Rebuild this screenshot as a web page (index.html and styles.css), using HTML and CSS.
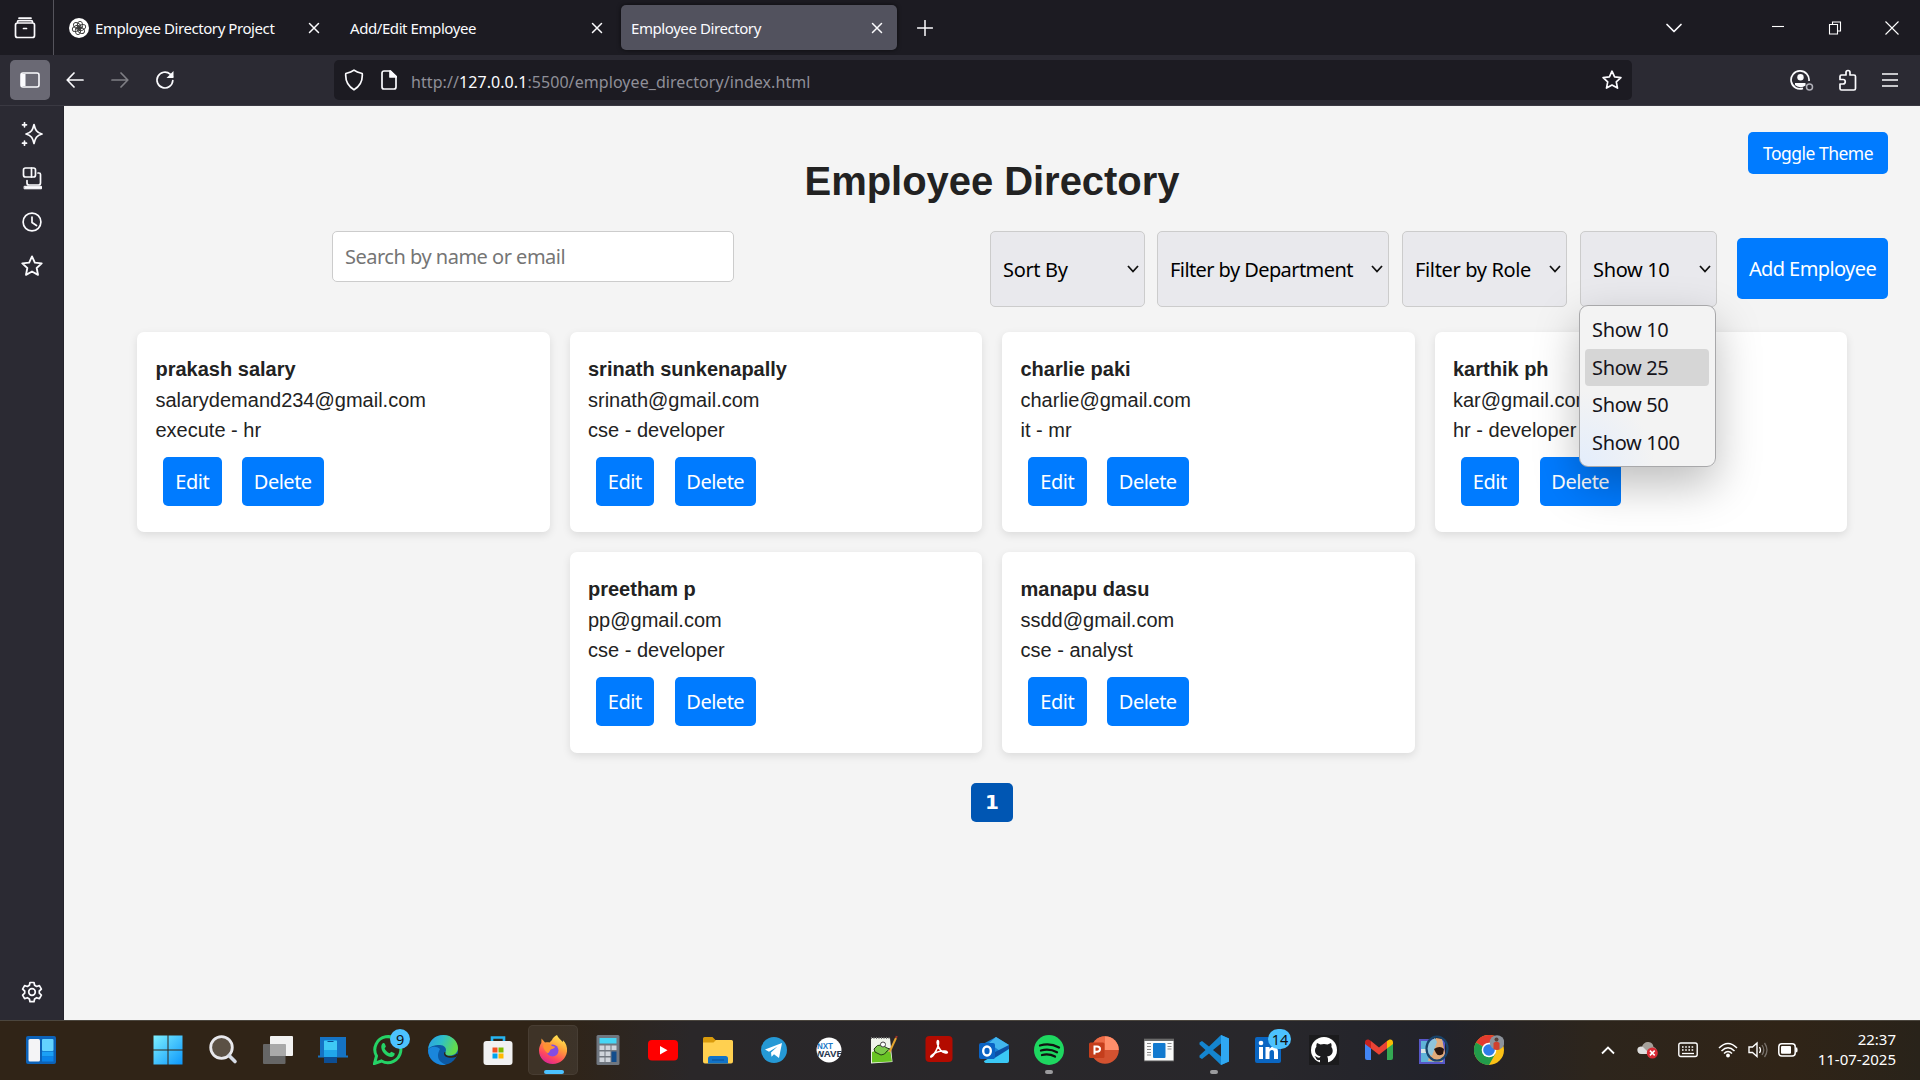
FILE: index.html
```html
<!DOCTYPE html>
<html lang="en">
<head>
<meta charset="utf-8">
<title>Employee Directory</title>
<link rel="stylesheet" href="styles.css">
</head>
<body>
<div class="screen">
  <header class="tabbar">
    <div class="recent"><svg class="ico" width="22" height="22" viewBox="0 0 22 22"><path d="M5 1.200h12M3.500 4.800q0-1.200 1.500-1.200h12q1.500 0 1.500 1.200M1.500 9V8a2 2 0 0 1 2-2h15a2 2 0 0 1 2 2v10.500a2 2 0 0 1-2 2h-15a2 2 0 0 1-2-2zM9.500 11.500h3"/></svg></div>
    <div class="tab tab-first">
      <svg class="favicon" width="20" height="20" viewBox="0 0 20 20"><circle cx="10" cy="10" r="10" fill="#fff"/><g fill="none" stroke="#333" stroke-width=".9"><ellipse cx="11" cy="7.300" rx="2.700" ry="4"/><ellipse cx="11" cy="7.300" rx="2.700" ry="4" transform="rotate(60 10 10)"/><ellipse cx="11" cy="7.300" rx="2.700" ry="4" transform="rotate(120 10 10)"/><ellipse cx="11" cy="7.300" rx="2.700" ry="4" transform="rotate(180 10 10)"/><ellipse cx="11" cy="7.300" rx="2.700" ry="4" transform="rotate(240 10 10)"/><ellipse cx="11" cy="7.300" rx="2.700" ry="4" transform="rotate(300 10 10)"/></g></svg>
      <span class="tab-title">Employee Directory Project</span>
      <svg class="ico close" width="12" height="12" viewBox="0 0 12 12"><path d="M1.500 1.500l9 9M10.500 1.500l-9 9"/></svg>
    </div>
    <div class="tab tab-second">
      <span class="tab-title">Add/Edit Employee</span>
      <svg class="ico close" width="12" height="12" viewBox="0 0 12 12"><path d="M1.500 1.500l9 9M10.500 1.500l-9 9"/></svg>
    </div>
    <div class="tab tab-active">
      <span class="tab-title">Employee Directory</span>
      <svg class="ico close" width="12" height="12" viewBox="0 0 12 12"><path d="M1.500 1.500l9 9M10.500 1.500l-9 9"/></svg>
    </div>
    <svg class="ico newtab" width="16" height="16" viewBox="0 0 16 16"><path d="M8 .5v15M.5 8h15"/></svg>
    <div class="winctl">
      <svg class="ico" width="18" height="18" viewBox="0 0 18 18"><path d="M2 5.500l7 7 7-7"/></svg>
      <svg class="thin min" width="14" height="14" viewBox="0 0 14 14"><path d="M1 5.500h12"/></svg>
      <svg class="thin" width="14" height="14" viewBox="0 0 14 14"><path d="M1.500 3.500h8v9.500h-8zM4.500 3.500v-2.500h8v9h-3"/></svg>
      <svg class="thin" width="14" height="14" viewBox="0 0 14 14"><path d="M.5.500l13 13M13.500.500l-13 13"/></svg>
    </div>
  </header>

  <div class="toolbar">
    <div class="side-btn"><svg width="20" height="16" viewBox="0 0 20 16"><rect x="1" y="1" width="18" height="14" rx="2" fill="none" stroke="#fbfbfe" stroke-width="1.600"/><path d="M1 2h4.500v12H1z" fill="#fbfbfe"/></svg></div>
    <svg class="ico back" width="18" height="16" viewBox="0 0 18 16"><path d="M17 8H1.500M8 1L1.200 8 8 15"/></svg>
    <svg class="ico fwd" width="18" height="16" viewBox="0 0 18 16"><path d="M1 8h15.500M10 1l6.800 7-6.800 7"/></svg>
    <svg class="ico reload" width="20" height="20" viewBox="0 0 20 20"><path d="M17.800 10.500a7.900 7.900 0 1 1-2.600-6.300l2.300 2.300"/><path d="M18.500 1v7h-7z" fill="#fbfbfe" stroke="none"/></svg>
    <div class="urlbar">
      <svg class="ico" width="20" height="22" viewBox="0 0 20 22"><path d="M10 1.200c2 1.600 5 2.600 8.200 3.300.6 6.500-1.700 12.500-8.200 16.300C3.500 17 1.200 11 1.800 4.500 5 3.800 8 2.800 10 1.200z"/></svg>
      <svg class="ico doc" width="16" height="20" viewBox="0 0 16 20"><path d="M9.500 1H3a2 2 0 0 0-2 2v14a2 2 0 0 0 2 2h10a2 2 0 0 0 2-2V6.500z"/><path d="M9 1l6.500 6H9z" fill="#fbfbfe"/></svg>
      <span class="url">http://<b>127.0.0.1</b>:5500/employee_directory/index.html</span>
      <svg class="ico bookmark" width="20" height="20" viewBox="0 0 20 20"><path d="M10 1.200l2.600 5.700 6.300.7-4.600 4.200 1.200 6.300L10 15l-5.500 3.100 1.200-6.300L1.100 7.600l6.300-.7z"/></svg>
    </div>
    <div class="tools">
      <svg width="24" height="22" viewBox="0 0 24 22"><path d="M13 19.400A9 9 0 1 1 19 12" fill="none" stroke="#fbfbfe" stroke-width="1.700"/><circle cx="10.500" cy="8.300" r="3.200" fill="#fbfbfe"/><path d="M5 14h10.500v2.500a8 8 0 0 1-10.500-.5z" fill="#fbfbfe"/><circle cx="19.500" cy="18" r="3" fill="none" stroke="#b0b0b8" stroke-width="1.500"/></svg>
      <svg class="ico" width="20" height="22" viewBox="0 0 20 22"><path d="M2 9V7.500A1.500 1.500 0 0 1 3.500 6H8V3.500a2 2 0 0 1 4 0V6h4a1.500 1.500 0 0 1 1.500 1.500v12A1.500 1.500 0 0 1 16 21H3.500A1.500 1.500 0 0 1 2 19.500V15h3a2.200 2.200 0 0 0 0-4.500H2z"/></svg>
      <svg class="ico" width="16" height="16" viewBox="0 0 16 16"><path d="M.5 2h15M.5 8h15M.5 14h15"/></svg>
    </div>
  </div>

  <div class="middle">
    <nav class="rail">
      <svg class="ico" width="22" height="24" viewBox="0 0 22 24"><path d="M13 2.500c1.300 5.500 2.500 8 8 9.500-5.500 1.500-6.700 4-8 9.500-1.300-5.500-2.500-8-8-9.500 5.500-1.500 6.700-4 8-9.500zM3.500.8v4M1.500 2.800h4M3.500 19.200v4M1.500 21.200h4"/></svg>
      <svg class="ico" width="22" height="24" viewBox="0 0 22 24"><rect x="2.500" y="2" width="12" height="9" rx="2"/><path d="M10.500 2v9M17 7h1a1.500 1.500 0 0 1 1.500 1.500V17a2 2 0 0 1-2 2H8a2 2 0 0 1-2-2v-2.500"/><path d="M3.500 20.300h17v2.500h-17z" fill="#fbfbfe" stroke-width="1"/></svg>
      <svg class="ico" width="22" height="24" viewBox="0 0 22 24"><circle cx="11" cy="12" r="8.900"/><path d="M11 7v5.500l4.500 3"/></svg>
      <svg class="ico" width="22" height="24" viewBox="0 0 20 22"><path d="M10 2.200l2.600 5.700 6.300.7-4.600 4.200 1.200 6.300L10 16l-5.500 3.100 1.200-6.300L1.100 8.600l6.300-.7z"/></svg>
      <svg class="ico gear" width="22" height="22" viewBox="0 0 22 22"><path d="M9 1.500h4l.6 2.800 2 1.200 2.800-.9 2 3.500-2.100 1.900v2.200l2.100 1.900-2 3.500-2.800-.9-2 1.200-.6 2.800H9l-.6-2.800-2-1.200-2.800.9-2-3.500L3.700 12.200V10L1.600 8.100l2-3.500 2.800.9 2-1.200z"/><circle cx="11" cy="11" r="3.300"/></svg>
    </nav>

    <main class="page">
      <div class="theme-row"><button class="btn theme">Toggle Theme</button></div>
      <h1>Employee Directory</h1>
      <div class="controls">
        <input class="search" placeholder="Search by name or email">
        <div class="filters">
          <div class="select s-sort"><span>Sort By</span><svg class="caret" width="12" height="8" viewBox="0 0 12 8"><path d="M1 1l5 5.500L11 1"/></svg></div>
          <div class="select s-dept"><span>Filter by Department</span><svg class="caret" width="12" height="8" viewBox="0 0 12 8"><path d="M1 1l5 5.500L11 1"/></svg></div>
          <div class="select s-role"><span>Filter by Role</span><svg class="caret" width="12" height="8" viewBox="0 0 12 8"><path d="M1 1l5 5.500L11 1"/></svg></div>
          <div class="select s-show"><span>Show 10</span><svg class="caret" width="12" height="8" viewBox="0 0 12 8"><path d="M1 1l5 5.500L11 1"/></svg>
            <ul class="menu"><li>Show 10</li><li class="hover">Show 25</li><li>Show 50</li><li>Show 100</li></ul>
          </div>
          <button class="btn add">Add Employee</button>
        </div>
      </div>
      <section class="cards">
        <article class="card"><strong>prakash salary</strong><p>salarydemand234@gmail.com</p><p>execute - hr</p><div class="acts"><button class="btn">Edit</button><button class="btn">Delete</button></div></article>
        <article class="card"><strong>srinath sunkenapally</strong><p>srinath@gmail.com</p><p>cse - developer</p><div class="acts"><button class="btn">Edit</button><button class="btn">Delete</button></div></article>
        <article class="card"><strong>charlie paki</strong><p>charlie@gmail.com</p><p>it - mr</p><div class="acts"><button class="btn">Edit</button><button class="btn">Delete</button></div></article>
        <article class="card"><strong>karthik ph</strong><p>kar@gmail.com</p><p>hr - developer</p><div class="acts"><button class="btn">Edit</button><button class="btn">Delete</button></div></article>
        <article class="card"><strong>preetham p</strong><p>pp@gmail.com</p><p>cse - developer</p><div class="acts"><button class="btn">Edit</button><button class="btn">Delete</button></div></article>
        <article class="card"><strong>manapu dasu</strong><p>ssdd@gmail.com</p><p>cse - analyst</p><div class="acts"><button class="btn">Edit</button><button class="btn">Delete</button></div></article>
      </section>
      <div class="pager"><button class="pageno">1</button></div>
    </main>
  </div>

  <footer class="taskbar">
    <svg class="widgets" width="30" height="28" viewBox="0 0 30 28"><rect width="30" height="28" rx="2" fill="#0c62b8"/><rect x="2.500" y="3" width="11.500" height="22.500" rx="1.500" fill="#f4f4f6"/><rect x="16" y="3" width="11.500" height="12" rx="1" fill="#63d3ff"/><rect x="16" y="15.500" width="11.500" height="5" fill="#1ba0f5"/><rect x="16" y="20.500" width="11.500" height="5" fill="#0a84ea"/></svg>
    <div class="apps">
      <div class="app"><svg width="30" height="30" viewBox="0 0 30 30"><defs><linearGradient id="win" gradientUnits="userSpaceOnUse" x1="0" y1="0" x2="30" y2="30"><stop offset="0" stop-color="#7ff1ff"/><stop offset="1" stop-color="#0a95fb"/></linearGradient></defs><path d="M.5.500h14v14H.5zM15.500.500h14v14h-14zM.5 15.500h14v14H.5zM15.500 15.500h14v14h-14z" fill="url(#win)"/></svg></div>
      <div class="app"><svg width="30" height="30" viewBox="0 0 30 30"><circle cx="13.500" cy="12.500" r="10.800" fill="#5b5145" stroke="#e8e8ec" stroke-width="2.800"/><path d="M21 20.500l6 6" stroke="#d5dbe6" stroke-width="3.600" stroke-linecap="round"/></svg></div>
      <div class="app"><svg width="30" height="30" viewBox="0 0 30 30"><rect x="7" y="1" width="23" height="20" rx="1" fill="#f2f2f2"/><rect x="0" y="9" width="22.500" height="20" rx="1" fill="#666"/><path d="M7 9h15.500v12H7z" fill="#a9a9a9"/></svg></div>
      <div class="app"><svg width="30" height="30" viewBox="0 0 30 30"><path d="M2 2h26v18.500h2v2H0v-2h2z" fill="#1573c4"/><rect x="6" y="5" width="13" height="23" rx="1" fill="#20a6ea"/><path d="M6 6h13v9H6z" fill="#3fc9f5"/><path d="M6 22h13v6H6z" fill="#0c4d93"/><path d="M9.500 6.500h6" stroke="#0c4d93"/></svg></div>
      <div class="app"><svg width="30" height="30" viewBox="0 0 30 30"><path d="M1.500 28.500l2-7.500a13 13 0 1 1 5 5z" fill="none" stroke="#25d366" stroke-width="3"/><path d="M9.500 8.500c1-.8 2-.5 2.400.5l1 2.500-1.300 2c1 2.200 2.700 3.800 5 4.800l1.800-1.600 3.200 1.600c.5 2.500-2 4-4 3.700-5-1-8.800-5-9.300-9.500-.1-1.600.3-3 1.200-4z" fill="#25d366"/></svg><span class="badge b9">9</span></div>
      <div class="app"><svg width="30" height="30" viewBox="0 0 30 30"><defs><linearGradient id="edA" x1="0" y1="0" x2="1" y2=".3"><stop offset="0" stop-color="#2b9bea"/><stop offset=".5" stop-color="#2fc0c8"/><stop offset="1" stop-color="#62dc4c"/></linearGradient></defs><circle cx="15" cy="15" r="15" fill="#0c59a4"/><path d="M0 15a15 15 0 0 0 18 14.700C10 27 8 21 12 14c-4-4-11-2-12 1z" fill="#1a86dc"/><path d="M0 14.500C1 5 7.500 0 15.500 0 24 0 30 6.500 30 13c0 5-4 7.500-8.500 7.500-4 0-5-2-3.800-4C19 13 16 10 12 10 6 10 1 12 0 14.500z" fill="url(#edA)"/><path d="M17.500 17c-1 2 1 4 4 4 3 .2 5.500-.8 7-2.300l1.500.3-2 3c-5 1.500-12 1-12-3.500 0-1 .5-1.500 1.500-1.500z" fill="#2f2417"/></svg></div>
      <div class="app"><svg width="30" height="30" viewBox="0 0 30 30"><path d="M9 7V2.500h12V7" fill="none" stroke="#26b4f0" stroke-width="2.600"/><rect x=".5" y="6" width="29" height="24" rx="3" fill="#f1f1f2"/><path d="M9.500 12.500h5v5h-5z" fill="#f25022"/><path d="M15.500 12.500h5v5h-5z" fill="#7fba00"/><path d="M9.500 18.500h5v5h-5z" fill="#00a4ef"/><path d="M15.500 18.500h5v5h-5z" fill="#ffb900"/></svg></div>
      <div class="app current"><svg width="30" height="30" viewBox="0 0 30 30"><defs><linearGradient id="ff" x1=".8" y1="0" x2=".3" y2="1"><stop offset="0" stop-color="#fff04a"/><stop offset=".4" stop-color="#ff9a2a"/><stop offset=".75" stop-color="#ff3b52"/><stop offset="1" stop-color="#d8168f"/></linearGradient></defs><path d="M19 0c1 3 4 4.500 5.500 7 .6-.7.500-1.800.5-1.800C28 8 29.500 12 29 16.500 28 24 22 29 14.800 29 7 29 1 23 1 15.500c0-3 1-5.500 2.300-7.500l.2-4.500L7 7.500c1.500-.4 3-.3 4.500 0L14 5c.7-2 2.500-4 5-5z" fill="url(#ff)"/><circle cx="14.500" cy="15.500" r="6" fill="#7a3fe0"/><path d="M5 10c3-1.800 7-1.500 9 1l3 .8c-.5 2-2.500 2-4 2.500-1.500 1-1 3.500-3.500 4C7 16 5 13.500 5 10z" fill="#ff8a22"/></svg><i class="run wide"></i></div>
      <div class="app"><svg width="30" height="30" viewBox="0 0 30 30"><rect x="3.500" width="23" height="30" rx="1.500" fill="#707780"/><path d="M6.500 3h17v5.500h-17z" fill="#45d6f5"/><path d="M6.500 10.500h5v4.500h-5zM12.500 10.500h5v4.500h-5zM18.500 10.500h5v4.500h-5zM6.500 16.500h5V21h-5zM12.500 16.500h5V21h-5zM6.500 22.500h5V27h-5zM12.500 22.500h5V27h-5z" fill="#cfd5dc"/><path d="M18.500 16.500h5V27h-5z" fill="#124d8c"/></svg></div>
      <div class="app"><svg width="30" height="30" viewBox="0 0 30 30"><rect y="5" width="30" height="20.500" rx="4" fill="#f00"/><path d="M12 11l7.500 4.200L12 19.500z" fill="#fff"/></svg></div>
      <div class="app"><svg width="30" height="30" viewBox="0 0 30 30"><path d="M0 3.500Q0 2 1.500 2h8l3 3H28v5H0z" fill="#d99b0c"/><path d="M0 7.500h10.500l2.500-2.500h15.500Q30 5 30 6.500v20q0 2-2 2H2q-2 0-2-2z" fill="#ffd050"/><path d="M5 28.500v-5Q5 21 7.500 21h15q2.500 0 2.500 2.500v5z" fill="#1173c8"/><path d="M9 25h12" stroke="#0b4f92"/></svg></div>
      <div class="app"><svg width="30" height="30" viewBox="0 0 30 30"><circle cx="15" cy="15" r="13" fill="#2599d5"/><path d="M6 14.500l17-6.500-3 15-5-3.800-2.500 2.500-.5-4.200 6.500-6-8.500 5.200z" fill="#fff"/></svg></div>
      <div class="app"><svg width="30" height="30" viewBox="0 0 30 30"><defs><clipPath id="nx"><circle cx="15" cy="15" r="12.500"/></clipPath></defs><circle cx="15" cy="15" r="12.500" fill="#fff"/><g clip-path="url(#nx)" class="nxt"><text x="3" y="14" textLength="16" lengthAdjust="spacingAndGlyphs" fill="#1b78c8">NXT</text><text x="1" y="22" textLength="28" lengthAdjust="spacingAndGlyphs" fill="#26364d">WAVE</text></g></svg></div>
      <div class="app"><svg width="30" height="30" viewBox="0 0 30 30"><path d="M2 3h19l2.500 24L2 28.500z" fill="#eff3ea"/><path d="M3 17q10-4 18.500 0l1.500 9.500-20 1z" fill="#69c423"/><path d="M5 14q3-5 8-4l5 3 3 1-3 2q-2 4-6 4l-6-3z" fill="#7ccb4a" stroke="#253b17"/><circle cx="14" cy="9.500" r="2.500" fill="#fff" stroke="#444"/><path d="M27 3l-6.500 14" stroke="#e3a42f" stroke-width="2"/><path d="M27.800 1l-.8 2" stroke="#a3322a" stroke-width="2"/><path d="M2 3h20" stroke="#777" stroke-dasharray="1 1.500" stroke-width="2"/></svg></div>
      <div class="app"><svg width="30" height="30" viewBox="0 0 30 30"><rect x="1.500" y="1" width="27" height="26" rx="4" fill="#b30b00"/><path d="M7.500 20.500c-2 2.500.5 1.800 2.500-1.300 3-4.500 5-9 4.500-12.500-.5-2.500-2-.5-1 2.500 1.300 4.500 4.500 8 8 8.700 3 .5 2-1.500-.5-1.800-4-.3-9.500 1-13.500 4.400z" fill="none" stroke="#fff" stroke-width="1.600"/></svg></div>
      <div class="app"><svg width="30" height="30" viewBox="0 0 30 30"><path d="M4 9L17 2l13 8v5L14 25 5 16z" fill="#1680d5"/><path d="M17 2l13 8-9 6-11-8z" fill="#42b6ee"/><path d="M30 12v14q0 2-2 2H8q-3 0-3-2z" fill="#3bc8f5"/><path d="M30 10v4L14 24l-4-4z" fill="#0d50a5"/><rect y="8" width="16" height="16" rx="2" fill="#0a63c4"/><ellipse cx="8" cy="16" rx="3.800" ry="4.500" fill="none" stroke="#fff" stroke-width="2.400"/></svg></div>
      <div class="app"><svg width="30" height="30" viewBox="0 0 30 30"><circle cx="15" cy="15" r="15" fill="#1ed760"/><path d="M6 10.500q10-3 19 2M7 15.500q8.500-2.300 16 1.800M8 20q7-1.800 13 1.600" fill="none" stroke="#111" stroke-width="2.300" stroke-linecap="round"/></svg><i class="run"></i></div>
      <div class="app"><svg width="30" height="30" viewBox="0 0 30 30"><circle cx="16" cy="15" r="13.800" fill="#d35230"/><path d="M2.500 15A13.700 13.700 0 0 1 16 1.200V15z" fill="#ed6c47"/><path d="M16 1.200A13.700 13.700 0 0 1 29.800 15H16z" fill="#ff8f6b"/><rect y="7.500" width="15.500" height="15.500" rx="1.500" fill="#c43e1c"/><path d="M5.500 19.500v-8H8q3 0 3 2.600T8 16.700H5.500" fill="none" stroke="#fff" stroke-width="2"/></svg></div>
      <div class="app"><svg width="30" height="30" viewBox="0 0 30 30"><path d="M0 4h30v22H0z" fill="#fafafa" stroke="#555"/><path d="M0 4h30v2H0z" fill="#6b6b6b"/><rect x="9" y="8" width="12.500" height="15" rx="1" fill="#1279cf"/><path d="M3 8.500h4M3 11.500h4M3 14.500h4M3 17.500h4M3 20h4M23.500 8.500h4M23.500 11.500h4M23.500 14h4" stroke="#8b8b8b"/></svg></div>
      <div class="app"><svg width="30" height="30" viewBox="0 0 30 30"><path d="M22 0l8 3.500v23L22 30 10 18.500 3 24l-2.500-1.500v-2L6.500 15 .5 9.500v-2L3 6l7 5.500zM22 8.500L14 15l8 6.500z" fill="#1485cf" fill-rule="evenodd"/><path d="M22 0l8 3.500v23L22 30z" fill="#2fa8f2"/></svg><i class="run"></i></div>
      <div class="app"><svg width="30" height="30" viewBox="0 0 30 30"><rect x="1" y="2" width="26" height="26" rx="2" fill="#0a66c2"/><circle cx="7" cy="8" r="2.300" fill="#fff"/><path d="M5 12h4v12H5zM11.500 12h4v1.700c1-1.400 2.300-2 4-2 3.500 0 4.500 2.300 4.500 5.300v7h-4v-6.300c0-1.700-.5-2.700-2-2.700s-2.500 1-2.500 2.800V24h-4z" fill="#fff"/></svg><span class="badge b14">14</span></div>
      <div class="app"><svg width="30" height="30" viewBox="0 0 30 30"><path d="M0 0h30v30H0z" fill="#1b1b1d"/><circle cx="15" cy="15" r="13" fill="#fff"/><path d="M8 8l3.500 1.500q3.500-.8 7 0L22 8q1 2 .4 4 1.300 1.500 1.300 3.500c0 4-2.500 5.500-5.700 6 .7.800 1 1.500 1 2.800V28h-8v-3c-3 .6-3.700-1-4.300-2.500l-1.200-1.300c2-.4 2.500 2 5.500 1.300 0-.5.300-.8.700-1.200-3-.4-5.700-2-5.700-6q0-2 1.400-3.500Q7 10 8 8z" fill="#1b1b1d"/></svg></div>
      <div class="app"><svg width="30" height="30" viewBox="0 0 30 30"><path d="M1 8l6 4.500V25H3q-2 0-2-2z" fill="#4285f4"/><path d="M29 8l-6 4.500V25h4q2 0 2-2z" fill="#34a853"/><path d="M7 6l8 6.500L23 6v7.500l-8 6.300-8-6.300z" fill="#ea4335"/><path d="M1 7.500C1 4 4.500 3.500 7 6v7.500L1 9z" fill="#c5221f"/><path d="M29 7.500C29 4 25.500 3.500 23 6v7.500L29 9z" fill="#fbbc04"/></svg></div>
      <div class="app"><svg width="30" height="30" viewBox="0 0 30 30"><path d="M1 5h24v23H1z" fill="#5fb3d8" stroke="#5757c8" stroke-width="2"/><path d="M2 14h9v4H2z" fill="#d8e4e2"/><path d="M9 26L13 10l4-7 6 1 3 14-3 9z" fill="#e2ab7a"/><path d="M8 18q0-12 8-15l2 4-5 14z" fill="#8fc4dc"/><path d="M15 14q6-4 10 0l-1 5q-5 3-7-1z" fill="#2a160f"/><ellipse cx="18" cy="13.500" rx="10.500" ry="12" fill="none" stroke="#19436b" stroke-width="2.200"/></svg></div>
      <div class="app"><svg width="30" height="30" viewBox="0 0 30 30"><circle cx="15" cy="15" r="15" fill="#fbc116"/><path d="M15 15L2 7.500A15 15 0 0 1 28 7.500H15z" fill="#e33b2e"/><path d="M2 7.500A15 15 0 0 0 15 30l6.500-11.500L15 15z" fill="#229c4b"/><circle cx="15" cy="15" r="7.300" fill="#fff"/><circle cx="15" cy="15" r="5.800" fill="#2f7de9"/><circle cx="23" cy="7.500" r="7.300" fill="#8c929b"/><path d="M19.500 8q3-3 6 0v6.500q-3 1-6-.5z" fill="#d2402d"/><circle cx="22.500" cy="4.500" r="2" fill="#573f38"/></svg></div>
    </div>
    <div class="tray">
      <svg width="14" height="10" viewBox="0 0 14 10"><path d="M1 8.500l6-6 6 6" fill="none" stroke="#fff" stroke-width="1.800"/></svg>
      <svg width="22" height="18" viewBox="0 0 22 18"><path d="M5 13q-4.500 0-4.500-4T5 5.500Q7 .5 11.500 1 16 1.500 16.500 6q4 1 3 7z" fill="#a5a19b"/><path d="M5 13Q.5 13 .5 9T6 6l7 7z" fill="#dedede"/><circle cx="15.300" cy="12" r="5.500" fill="#d92b35"/><path d="M12.900 9.600l4.800 4.800M17.700 9.600l-4.800 4.800" stroke="#fff" stroke-width="1.500"/></svg>
      <svg width="20" height="16" viewBox="0 0 20 16"><rect x=".8" y="1" width="18.400" height="13.500" rx="2" fill="none" stroke="#fff" stroke-width="1.400"/><path d="M4 5h12.500M4 8h12.500" stroke="#fff" stroke-width="1.600" stroke-dasharray="1.600 1.600"/><path d="M4 11.500h12" stroke="#fff" stroke-width="1.300"/></svg>
      <svg width="20" height="16" viewBox="0 0 20 16"><g fill="none" stroke="#fff" stroke-width="1.500"><path d="M1 6q9-9 18 0M3.500 9q6.500-6.500 13 0M6 11.500q4-4 8 0"/></g><circle cx="10" cy="13.500" r="1.900" fill="#fff"/></svg>
      <svg width="20" height="18" viewBox="0 0 20 18"><path d="M1 6h3.500L9 2v13.500L4.500 11.500H1z" fill="none" stroke="#fff" stroke-width="1.400"/><path d="M11.500 6q2 3 0 6" fill="none" stroke="#fff" stroke-width="1.300"/><path d="M14 4q3.500 5 0 10M16.500 2q5 7 0 14" fill="none" stroke="#77706a" stroke-width="1.300"/></svg>
      <svg width="20" height="14" viewBox="0 0 20 14"><rect x=".8" y=".8" width="16.400" height="12.200" rx="3" fill="none" stroke="#fff" stroke-width="1.500"/><rect x="3" y="3" width="10" height="7.800" rx="1" fill="#fff"/><path d="M18 4.500h1.200q.8 2.400 0 4.800H18z" fill="#fff"/></svg>
      <div class="clock"><span>22:37</span><span>11-07-2025</span></div>
    </div>
  </footer>
</div>
</body>
</html>
```
FILE: styles.css
```css
* { box-sizing: border-box; }
body { margin: 0; font-family: "Liberation Sans", Arial, sans-serif; }
svg { display: block; flex: none; }
.screen { width: 1920px; height: 1080px; display: flex; flex-direction: column; overflow: hidden; }
.ico { fill: none; stroke: #fbfbfe; stroke-width: 1.7; stroke-linejoin: round; stroke-linecap: round; }
.thin { fill: none; stroke: #fff; stroke-width: 1.1; }

.tabbar { height: 55px; background: #1c1b22; display: flex; align-items: center; color: #fbfbfe; font: 15px "Noto Sans", sans-serif; flex: none; }
.recent { width: 54px; height: 55px; border-right: 1px solid #55545c; display: flex; align-items: center; padding-left: 14px; }
.tab { width: 277px; height: 45px; display: flex; align-items: center; padding: 0 14px 0 6px; white-space: nowrap; }
.tab-first { width: 288px; padding-left: 15px; padding-right: 22px; margin-right: 2px; }
.tab-second { padding-right: 18px; }
.tab-title { letter-spacing: -0.42px; }
.favicon { margin-right: 6px; }
.close { margin-left: auto; stroke-width: 1.5; }
.tab-active { background: #52525e; border-radius: 5px; width: 276px; padding-left: 10px; box-shadow: 0 0 4px rgba(0,0,0,.6); }
.newtab { margin-left: 20px; stroke-width: 1.5; }
.winctl { margin-left: auto; display: flex; align-items: center; gap: 43px; padding-right: 21px; }
.winctl .min { margin-left: 45px; }

.toolbar { height: 51px; flex: none; background: #2b2a33; display: flex; align-items: center; padding: 0 22px 0 10px; border-bottom: 1px solid #3a3942; }
.side-btn { width: 40px; height: 40px; border-radius: 5px; background: #6a6974; display: flex; align-items: center; justify-content: center; }
.back { margin-left: 16px; }
.fwd { margin-left: 27px; opacity: .4; }
.reload { margin-left: 26px; }
.urlbar { margin-left: 159px; width: 1298px; height: 40px; border-radius: 5px; background: #1c1b22; display: flex; align-items: center; padding: 0 10px; color: #8f8f98; font: 16px "Noto Sans", sans-serif; }
.doc { margin: 0 14px 0 17px; }
.url { letter-spacing: 0.07px; padding-top: 3px; }
.url b { font-weight: 400; color: #fbfbfe; }
.bookmark { margin-left: auto; }
.tools { margin-left: auto; display: flex; align-items: center; gap: 24px; }

.middle { flex: 1; display: flex; min-height: 0; }
.rail { width: 64px; background: #2b2a33; border-right: 1px solid #24232b; display: flex; flex-direction: column; align-items: center; gap: 20px; padding: 16px 0 17px; }
.gear { margin-top: auto; }

.page { flex: 1; background: #f4f4f4; color: #222; }
.btn, .search, .select, .pageno { font-family: "Noto Sans", sans-serif; font-size: 20px; }
.btn { background: #007bff; color: #fff; border: 0; border-radius: 5px; padding: 0; white-space: nowrap; }
.theme-row { display: flex; justify-content: flex-end; padding: 26px 32px 0 0; }
.theme { width: 140px; height: 42px; font-size: 17.5px; letter-spacing: -0.5px; }
h1 { margin: -16px 0 0; font-size: 40px; line-height: 46px; text-align: center; letter-spacing: -0.05px; }
.controls { display: flex; align-items: flex-start; padding: 27px 32px 0 268px; }
.search { width: 402px; height: 51px; border: 1px solid #ccc; border-radius: 5px; background: #fff; padding: 0 12px; letter-spacing: -0.5px; }
.search::placeholder { color: #757575; opacity: 1; }
.filters { margin-left: auto; display: flex; align-items: center; gap: 13px; }
.select { position: relative; height: 76px; border: 1px solid #ccc; border-radius: 5px; background: #e9e9ed; color: #000; display: flex; align-items: center; justify-content: space-between; padding: 0 5px 0 12px; white-space: nowrap; letter-spacing: -0.35px; }
.s-sort { width: 155px; margin-right: -1px; }
.s-dept { width: 232px; letter-spacing: -0.58px; }
.s-role { width: 165px; }
.s-show { width: 137px; }
.caret { fill: none; stroke: #111; stroke-width: 1.8; }
.add { width: 151px; height: 61px; margin: -2px 0 0 7px; letter-spacing: -0.6px; }
.menu { position: absolute; z-index: 2; left: -2px; top: 73px; width: 137px; height: 162px; margin: 0; padding: 5px 6px 6px 5px; list-style: none; border: 1px solid #a8a8aa; border-radius: 9px; background: radial-gradient(circle at 0 100%, #e3edfc 0, #f3f3f3 75px); color: #15141a; box-shadow: 0 18px 45px rgba(0,0,0,.26); }
.menu li { height: 37.5px; line-height: 38px; padding-left: 7px; border-radius: 4px; }
.menu .hover { background: #d6d6d6; }

.cards { display: flex; flex-wrap: wrap; justify-content: center; gap: 20px; width: 1710px; margin: 25px auto 0; }
.card { width: 412.5px; height: 200.3px; background: #fff; border-radius: 7px; box-shadow: 0 3px 8px rgba(0,0,0,.1); padding: 22px 18.500px; font-size: 20px; line-height: 30.6px; }
.card strong { display: block; }
.card p { margin: 0; }
.acts { display: flex; gap: 20.5px; margin: 11px 0 0 7.5px; }
.acts .btn { height: 49px; width: 58.5px; letter-spacing: -0.5px; }
.acts .btn + .btn { width: 81.5px; }
.pager { display: flex; justify-content: center; margin-top: 30px; }
.pageno { width: 42px; height: 39px; border: 0; border-radius: 5px; background: #0056b3; color: #fff; font-family: "DejaVu Sans", sans-serif; font-weight: 700; padding: 0; }

.taskbar { height: 60px; flex: none; border-top: 1px solid #4b463e; display: flex; align-items: center; padding: 0 0 1px 26px; background: linear-gradient(90deg, #302417 0, #302417 29%, #2a2729 36%, #28272b 66%, #22232b 75%, #2d251c 83%, #302417 93%, #29231a 100%); }
.widgets { margin-right: 84.5px; }
.apps { display: flex; align-items: center; }
.app { position: relative; width: 55.05px; height: 50px; display: flex; align-items: center; justify-content: center; }
.current::before { content: ""; position: absolute; inset: 0 2.5px; border-radius: 5px; background: rgba(255,255,255,.07); border: 1px solid rgba(255,255,255,.05); }
.run { position: absolute; left: 24px; bottom: 1px; width: 8px; height: 4px; border-radius: 2px; background: #9b9b9e; }
.run.wide { left: 18px; width: 20px; background: #4cc2ff; }
.badge { position: absolute; top: 4px; height: 20px; border-radius: 10px; background: #4cc2ff; color: #111; font: 14.500px/20px "Noto Sans", sans-serif; text-align: center; }
.b9 { left: 29.5px; width: 20px; }
.b14 { left: 27px; width: 23px; }
.nxt { font: bold 9px "Liberation Sans", sans-serif; }
.tray { margin-left: auto; padding-right: 24px; display: flex; align-items: center; color: #fff; }
.tray svg:nth-child(2) { margin-left: 22px; }
.tray svg:nth-child(3) { margin-left: 19px; }
.tray svg:nth-child(4) { margin-left: 20px; }
.tray svg:nth-child(5), .tray svg:nth-child(6) { margin-left: 10px; }
.clock { margin: -2px 0 0 20px; width: 78px; display: flex; flex-direction: column; align-items: flex-end; font: 15px/20px "Noto Sans", sans-serif; white-space: nowrap; }
```
